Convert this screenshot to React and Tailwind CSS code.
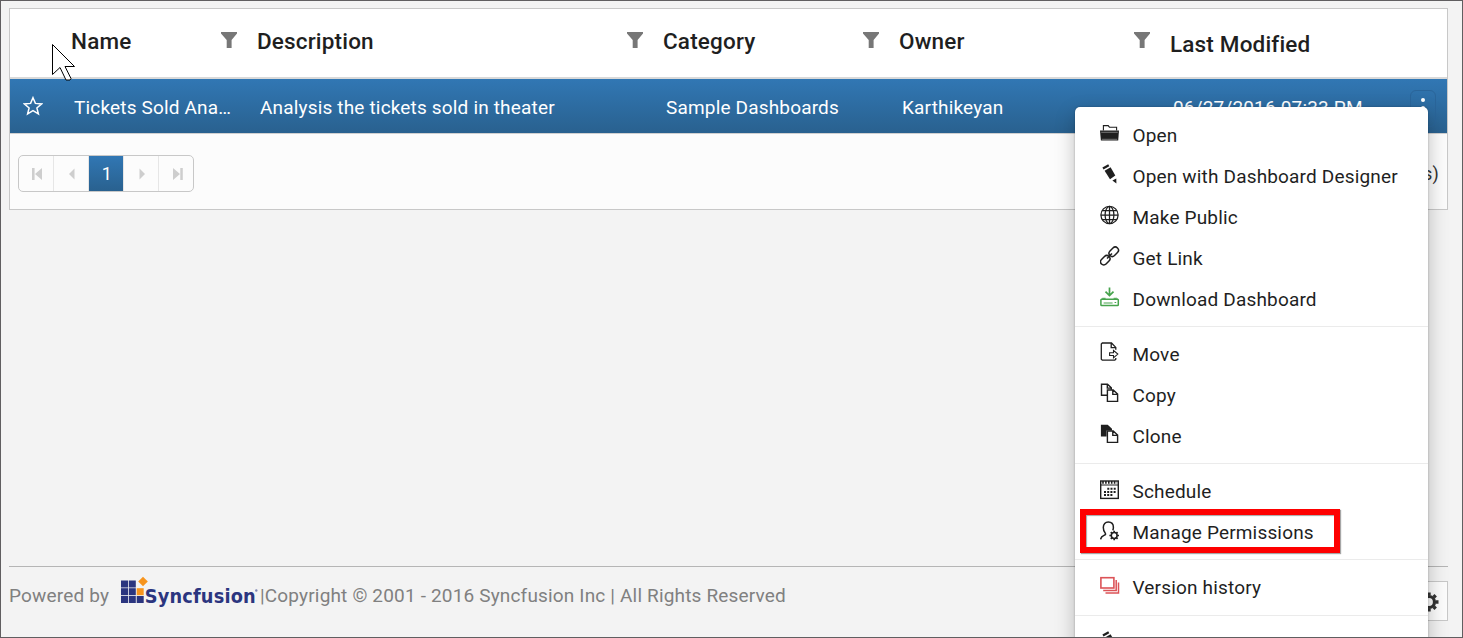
import React from 'react';

const Icon = ({ children, className = 'text-[#1f1f1f]' }) => (
  <svg
    viewBox="0 0 20 20"
    className={`h-5 w-5 shrink-0 -translate-y-0.5 ${className}`}
    fill="none"
    stroke="currentColor"
    strokeWidth="1.4"
  >
    {children}
  </svg>
);

const OpenIcon = () => (
  <Icon>
    <path d="M3.4 7.5V2.6h4.8l1.2 1.6h7.2v3.3" strokeWidth="1.1" />
    <path d="M0 7.6h19l-.8 10H.9z" fill="currentColor" stroke="none" />
    <path d="M1.2 9.3h16.6M1.8 16.3h15.4" stroke="#8a8a8a" strokeWidth=".8" />
  </Icon>
);

const PencilIcon = () => (
  <Icon>
    <g fill="currentColor" stroke="none">
      <path d="M2.4 3.4 8.2.2l1.1 2-5.8 3.2z" />
      <path d="m4.600 6.700 6-3.500 4.700 8.400-5.300 3.600z" />
      <path d="m12.4 16.4 3.9-1.9.1 4.900z" />
    </g>
  </Icon>
);

const GlobeIcon = () => (
  <Icon>
    <g strokeWidth="1.25">
      <circle cx="9.5" cy="10" r="8.6" />
      <ellipse cx="9.5" cy="10" rx="4.4" ry="8.6" />
      <path d="M9.5 1.4v17.2M.9 10h17.2M2.2 5.5h14.6M2.2 14.5h14.6" />
    </g>
  </Icon>
);

const LinkIcon = () => (
  <Icon>
    <g transform="rotate(-45 9.5 10)" strokeWidth="1.5">
      <rect x="-1.8" y="6.8" width="10.6" height="6.4" rx="3.2" />
      <rect x="10.2" y="6.8" width="10.6" height="6.4" rx="3.2" />
      <path d="M6 10h7" />
    </g>
  </Icon>
);

const DownloadIcon = () => (
  <Icon className="text-[#46a34c]">
    <path d="M9.5.6v8M5.500 4.600l4 4 4-4" strokeWidth="1.700" />
    <rect x=".9" y="12.300" width="17.400" height="6.200" rx=".8" strokeWidth="1.500" />
    <path d="M.9 12.900 2.600 11.300h3M18.300 12.900 16.600 11.300h-3" strokeWidth="1" />
    <path d="M3.600 16h9M14.600 15.500h1.600" strokeWidth="1" />
  </Icon>
);

const MoveIcon = () => (
  <Icon>
    <path d="M15.8 16v1.2l-1 1H2.3l-1-1V2l1-1h9.2l4.3 4.4v2.4M11.2 1v4.7h4.6" strokeWidth="1.3" />
    <path d="M9.6 10.7h3.9V8.4l4.3 3.7-4.3 3.7v-2.3H9.6z" strokeWidth="1.1" />
  </Icon>
);

const CopyIcon = () => (
  <Icon>
    <path d="M7 12.3H1.5V1.2h6l3.8 3.6v2M7.3 1.2v3.9h4" strokeWidth="1.4" />
    <path d="M7.4 7h5.8l4.4 4v7.4H7.4zM12.8 7v4.4h4.6" strokeWidth="1.4" />
  </Icon>
);

const CloneIcon = () => (
  <Icon>
    <path d="M.9.7h6.8L12 4.8v1.6H6.6v6.2H.9z" fill="currentColor" stroke="none" />
    <path d="M7.4 7h5.8l4.4 4v7.4H7.4zM12.8 7v4.4h4.6" strokeWidth="1.4" />
  </Icon>
);

const ScheduleIcon = () => (
  <Icon>
    <rect x=".7" y="1" width="17.6" height="17.4" />
    <path d="M1 5h17" strokeWidth="1" />
    <path d="M2.2 2.4h15" strokeDasharray="1.6 1.3" strokeWidth="2.6" />
    <path d="M7.3 8.7h9M4 11.900h12.3M4 15.1h9" strokeDasharray="2 1.2" strokeWidth="2" />
  </Icon>
);

const PermissionsIcon = () => (
  <Icon>
    <path
      d="M.6 18.4c.3-2.3 1.500-3.200 3.400-4 1.700-.7 1.900-1.300 1.200-2.300C3.900 10.600 3.300 8.800 3.300 6.600 3.300 3 5.300.9 8.300.9s5.100 2.100 5.100 5.300c0 1.200-.2 2.200-.6 3.200"
      strokeWidth="1.5"
    />
    <circle cx="14.2" cy="14.500" r="2.900" strokeWidth="1.500" />
    <path
      d="M14.200 9.700v2.200M14.200 17.100v2.200M9.400 14.500h2.200M16.800 14.500H19M10.800 11.100l1.500 1.500M16.100 16.400l1.500 1.500M17.600 11.100l-1.500 1.500M12.300 16.400l-1.500 1.500"
      strokeWidth="1.700"
    />
  </Icon>
);

const VersionIcon = () => (
  <Icon className="text-[#dc5357]">
    <rect x=".9" y="1.700" width="13" height="10.300" strokeWidth="1.600" />
    <path d="M16.200 4v10.400H3.200M18.500 6.500v10.400H5.500" strokeWidth="1.500" />
  </Icon>
);

const Funnel = () => (
  <svg viewBox="0 0 16 16" className="h-4 w-4 shrink-0" fill="#777">
    <path d="M0 0h16v1.600L10.600 8v8H5.700V8L0 1.600z" />
  </svg>
);

const groups = [
  [
    ['Open', OpenIcon],
    ['Open with Dashboard Designer', PencilIcon],
    ['Make Public', GlobeIcon],
    ['Get Link', LinkIcon],
    ['Download Dashboard', DownloadIcon],
  ],
  [
    ['Move', MoveIcon],
    ['Copy', CopyIcon],
    ['Clone', CloneIcon],
  ],
  [
    ['Schedule', ScheduleIcon],
    ['Manage Permissions', PermissionsIcon],
  ],
  [['Version history', VersionIcon]],
  [['', PencilIcon]],
];

const headers = [
  ['Name', true],
  ['Description', true],
  ['Category', true],
  ['Owner', true],
  ['Last Modified', false],
];

const cells = [
  'Tickets Sold Ana…',
  'Analysis the tickets sold in theater',
  'Sample Dashboards',
  'Karthikeyan',
  '06/27/2016 07:33 PM',
];

const columns = 'grid grid-cols-[47px_186px_406px_236px_271px_291px]';

const pagerIcons = {
  first: <path d="M0 0h2.600v12H0zM10 0v12L3 6z" />,
  prev: <path d="M7.500 0.500v11L2 6z" />,
  next: <path d="M2.500 0.500v11L8 6z" />,
  last: <path d="M0 0v12l7-6zM7.300 0h2.500v12H7.300z" />,
};

const PagerButton = ({ kind, last }) => (
  <div className={`flex w-[35px] shrink-0 items-center justify-center pl-0.5 ${last ? '' : 'border-r border-[#e6e6e6]'}`}>
    <svg viewBox="0 0 10 12" className="h-3 w-2.5" fill="#cecece">
      {pagerIcons[kind]}
    </svg>
  </div>
);

const Logo = () => (
  <svg width="138" height="34" viewBox="0 0 138 34" className="shrink-0">
    <g fill="#2b357f">
      <rect x="1" y="4.500" width="7" height="7" />
      <rect x="8.800" y="4.500" width="7" height="7" />
      <rect x="1" y="12.200" width="7" height="7" />
      <rect x="8.800" y="12.200" width="7" height="7" />
      <rect x="1" y="20" width="7" height="7" />
      <rect x="8.800" y="20" width="7" height="7" />
      <rect x="16.700" y="20" width="7" height="7" />
    </g>
    <g fill="#f7941d">
      <rect x="16.700" y="12.200" width="7" height="7" />
      <path d="m23 .7 4.800 4.700-4.800 4.800-4.800-4.800z" />
    </g>
    <text
      x="24.800"
      y="27"
      fontFamily="DejaVu Sans"
      fontWeight="700"
      fontSize="19.500"
      textLength="111"
      lengthAdjust="spacingAndGlyphs"
      fill="#2b357f"
    >
      Syncfusion
    </text>
    <circle cx="136.300" cy="14.500" r="1.200" fill="#8087b5" />
  </svg>
);

const ContextMenu = () => (
  <div className="absolute left-[1074px] top-[106px] z-10 h-[560px] w-[353px] rounded-t-[5px] bg-white shadow-[0_8px_20px_rgba(0,0,0,0.25),0_0_2px_rgba(0,0,0,0.3)]">
    {groups.map((group, i) => (
      <div
        key={i}
        className={
          i === 0 ? 'pt-[7.700px] pb-[6.300px]' : 'border-t border-[#ebebeb] pt-[7px] pb-[6.200px]'
        }
      >
        {group.map(([label, Glyph]) => (
          <div key={label} className="flex h-[41px] items-center gap-[12.500px] pl-[25px] text-[#1f1f1f]">
            <Glyph />
            <span className="pt-[1.500px]">{label}</span>
          </div>
        ))}
      </div>
    ))}
    <div className="absolute left-[5px] top-[402px] h-[44px] w-[260px] border-[6px] border-[#fe0000] shadow-[1px_1px_1px_rgba(0,0,0,0.35),inset_1px_1px_1px_rgba(0,0,0,0.35)]" />
  </div>
);

export default function App() {
  return (
    <div className="relative flex h-[638px] w-[1463px] flex-col overflow-hidden border border-[#605e60] bg-[#f3f3f3] pl-2 pr-[14px] pt-[7px] font-['Roboto',sans-serif] text-[19px] tracking-[0.170px]">
      <section className="h-[202px] w-[1439px] shrink-0 border border-[#c8c8c8] bg-[#fcfcfc]">
        <div className={`${columns} h-[70px] border-b-2 border-[#d9d9d9] bg-white`}>
          <div />
          {headers.map(([label, filter], i) => (
            <div
              key={label}
              className={`flex items-start justify-between pl-3.5 pr-1.5 text-[22.500px] font-medium leading-7 text-[#1f1f1f] ${
                i === 4 ? 'pt-[21px]' : 'pt-[18px]'
              }`}
            >
              <span className="whitespace-nowrap">{label}</span>
              {filter && (
                <span className="pt-[5px]">
                  <Funnel />
                </span>
              )}
            </div>
          ))}
        </div>
        <div
          className={`${columns} relative h-[54px] items-center bg-linear-to-b from-[#3177b4] to-[#29618f] text-white`}
        >
          <div className="flex pl-[13px]">
            <svg viewBox="0 0 20 20" className="h-5 w-5" fill="none" stroke="white" strokeWidth="1.500">
              <path d="m10 1.700 2.400 5.700 6.300.5-4.800 4 1.500 6-5.400-3.200-5.400 3.200 1.500-6-4.800-4 6.300-.5z" />
            </svg>
          </div>
          {cells.map((cell) => (
            <div key={cell} className="whitespace-nowrap pl-[17px] pt-[5px]">
              {cell}
            </div>
          ))}
          <div className="absolute right-[11px] top-[11px] flex h-[37px] w-[26px] flex-col items-center gap-1 rounded-[6px] border border-[#2a659a] pt-[7px]">
            <i className="h-1 w-1 rounded-full bg-white" />
            <i className="h-1 w-1 rounded-full bg-white" />
            <i className="h-1 w-1 rounded-full bg-white" />
          </div>
        </div>
        <div className="flex h-[76px] items-start justify-between border-t border-[#d0d0d0] pl-2 pr-2 pt-[21px]">
          <div className="flex h-[37px] w-[176px] overflow-hidden rounded-[5px] border border-[#c8c8c8]">
            <PagerButton kind="first" />
            <PagerButton kind="prev" />
            <div className="flex w-[35px] shrink-0 items-center justify-center border-r border-[#e6e6e6] bg-linear-to-b from-[#3177b4] to-[#29618f] pl-0.5 text-[18px] text-white">
              1
            </div>
            <PagerButton kind="next" />
            <PagerButton kind="last" last />
          </div>
          <span className="pt-[5px] text-[18px] text-[#333]">s)</span>
        </div>
      </section>

      <footer className="mt-auto flex h-[71px] w-[1439px] shrink-0 justify-between border-t border-[#b5b5b5] text-[#808080]">
        <div className="flex items-start">
          <span className="w-[111px] pt-[15px]">Powered by</span>
          <span className="w-[140px] pt-[9px]">
            <Logo />
          </span>
          <span className="whitespace-nowrap pt-[15px]">
            |Copyright © 2001 - 2016 Syncfusion Inc | All Rights Reserved
          </span>
        </div>
        <div className="mt-[14px] flex h-10 w-10 items-center justify-start border border-[#c8c8c8] bg-[#fcfcfc] pl-[10px] pt-0.5">
          <svg viewBox="-10 -10 20 20" className="h-5 w-5 shrink-0" fill="none" stroke="#333">
            <circle r="5.500" strokeWidth="3.200" />
            <path
              d="M0-9.500v3M0 9.500v-3M-9.500 0h3M9.500 0h-3M-6.700-6.700l2 2M6.700 6.700l-2-2M-6.700 6.700l2-2M6.700-6.700l-2 2"
              strokeWidth="3.400"
            />
          </svg>
        </div>
      </footer>

      <ContextMenu />

      <svg
        className="absolute left-[50px] top-[42px] h-10 w-[26px]"
        viewBox="51 43 26 40"
        fill="white"
        stroke="black"
        strokeWidth="1"
      >
        <path d="M52.500 44.500v30l7.500-7 6 12.500h4l1-1.500-6-12h9.500z" />
      </svg>
    </div>
  );
}
